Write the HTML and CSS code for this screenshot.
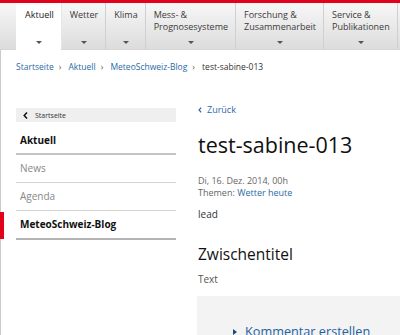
FILE: index.html
```html
<!DOCTYPE html>
<html lang="de">
<head>
    <meta charset="UTF-8">
    <title>test-sabine-013 - MeteoSchweiz</title>
    <link rel="stylesheet" href="styles.css">
</head>
<body>
    <div class="topbar"></div>
    <nav class="mainnav">
        <div class="nav-spacer"></div>
        <a class="tab active" href="#"><span>Aktuell</span><i class="caret"></i></a>
        <a class="tab" href="#"><span>Wetter</span><i class="caret"></i></a>
        <a class="tab" href="#"><span>Klima</span><i class="caret"></i></a>
        <a class="tab" href="#"><span>Mess- &amp;<br>Prognosesysteme</span><i class="caret"></i></a>
        <a class="tab" href="#"><span>Forschung &amp;<br>Zusammenarbeit</span><i class="caret"></i></a>
        <a class="tab" href="#"><span>Service &amp;<br>Publikationen</span><i class="caret"></i></a>
        <div class="nav-rest"></div>
    </nav>

    <div class="page">
        <div class="breadcrumb">
            <a href="#">Startseite</a><span class="sep">&#8250;</span>
            <a href="#">Aktuell</a><span class="sep">&#8250;</span>
            <a href="#">MeteoSchweiz-Blog</a><span class="sep">&#8250;</span>
            <span class="current">test-sabine-013</span>
        </div>

        <div class="columns">
            <aside class="sidenav">
                <a class="back" href="#">
                    <svg width="5" height="7" viewBox="0 0 5 7"><path d="M4 0.5 L1.2 3.5 L4 6.5" fill="none" stroke="#111" stroke-width="1.5"/></svg>
                    Startseite
                </a>
                <a class="side-title" href="#">Aktuell</a>
                <a class="side-item" href="#">News</a>
                <a class="side-item" href="#">Agenda</a>
                <a class="side-item selected" href="#">MeteoSchweiz-Blog</a>
            </aside>

            <main class="content">
                <a class="zurueck" href="#">
                    <svg width="4" height="6" viewBox="0 0 4 6"><path d="M3.2 0.6 L1 3 L3.2 5.4" fill="none" stroke="#2a6aa6" stroke-width="1.2"/></svg>
                    Zurück
                </a>
                <h1>test-sabine-013</h1>
                <p class="meta">Di, 16. Dez. 2014, 00h<br>Themen: <a href="#">Wetter heute</a></p>
                <p class="lead">lead</p>
                <h2>Zwischentitel</h2>
                <p class="text">Text</p>
                <div class="comment-box">
                    <a href="#"><span class="tri"></span>Kommentar erstellen</a>
                </div>
            </main>
        </div>
    </div>
</body>
</html>
```

FILE: styles.css
```css
/* Grundlayout */
body {
    margin: 0;
    font-family: "Open Sans", "Noto Sans", sans-serif;
    color: #222;
    background: #fff;
    overflow: hidden;
}

a {
    text-decoration: none;
    color: #2a6aa6;
}

.topbar {
    height: 3px;
    background: #e2001a;
}

/* Hauptnavigation */
.mainnav {
    display: flex;
    height: 46px;
    background: linear-gradient(#f7f7f7, #dcdcdc);
    border-bottom: 1px solid #d6d6d6;
}

.nav-spacer {
    width: 16px;
    flex: none;
}

.nav-rest {
    flex: 1;
    border-left: 1px solid #d0d0d0;
}

.tab {
    flex: none;
    display: flex;
    flex-direction: column;
    justify-content: space-between;
    align-items: center;
    padding: 6px 7px 5px 8px;
    border-left: 1px solid #d0d0d0;
    font-size: 9px;
    line-height: 12px;
    color: #3a3a3a;
    white-space: nowrap;
}

.tab span {
    align-self: flex-start;
}

.tab.active {
    background: #fff;
    color: #222;
    margin-bottom: -1px;
    padding-bottom: 6px;
    border-left-color: transparent;
}

.tab.active + .tab {
    border-left-color: #e6e6e6;
}

.caret {
    width: 0;
    height: 0;
    border-left: 3px solid transparent;
    border-right: 3px solid transparent;
    border-top: 3px solid #555;
}

/* Seite */
.page {
    border-left: 1px solid #cacaca;
    height: 290px;
    padding-left: 15px;
}

.breadcrumb {
    padding-top: 10px;
    font-size: 8.5px;
    line-height: 14px;
    color: #333;
}

.breadcrumb .sep {
    margin: 0 5px;
    color: #555;
}

.columns {
    display: flex;
    margin-top: 29px;
}

/* Seitennavigation */
.sidenav {
    width: 160px;
    flex: none;
}

.back {
    display: flex;
    align-items: center;
    gap: 7px;
    height: 14px;
    padding-left: 7px;
    margin-top: 5px;
    background: #efefef;
    font-size: 7px;
    color: #333;
}

.side-title {
    display: block;
    padding: 10px 0 5px 4px;
    font-size: 10px;
    line-height: 16px;
    font-weight: bold;
    color: #111;
    border-bottom: 2px solid #c4c4c4;
}

.side-item {
    display: block;
    position: relative;
    padding: 6px 0 7px 4px;
    font-size: 10px;
    line-height: 14px;
    color: #888;
    border-bottom: 1px solid #d4d4d4;
}

.side-item.selected {
    font-weight: bold;
    color: #111;
    border-bottom: 2px solid #b4b4b4;
}

.side-item.selected::before {
    content: "";
    position: absolute;
    left: -16px;
    top: 1px;
    bottom: -1px;
    width: 4px;
    background: #e2001a;
}

/* Inhalt */
.content {
    flex: 1;
    padding-left: 22px;
}

.zurueck {
    display: flex;
    align-items: center;
    gap: 5px;
    font-size: 9px;
    line-height: 13px;
}

h1 {
    margin: 14px 0 0;
    font-size: 21.5px;
    line-height: 30px;
    font-weight: normal;
    color: #111;
}

.meta {
    margin: 15px 0 0;
    font-size: 9px;
    line-height: 12px;
    color: #666;
}

.lead {
    margin: 8px 0 0;
    font-size: 10px;
    line-height: 14px;
    color: #333;
}

h2 {
    margin: 23px 0 0;
    font-size: 15.5px;
    line-height: 20px;
    font-weight: normal;
    color: #111;
}

.text {
    margin: 8px 0 0;
    font-size: 10px;
    line-height: 14px;
    color: #555;
}

.comment-box {
    margin: 10px 0 0 -1px;
    height: 60px;
    padding: 26px 0 0 36px;
    background: #f3f3f3;
    font-size: 12.7px;
    line-height: 18px;
}

.comment-box a {
    color: #1f5f9f;
}

.tri {
    display: inline-block;
    width: 0;
    height: 0;
    border-top: 3px solid transparent;
    border-bottom: 3px solid transparent;
    border-left: 4px solid #1a4a80;
    margin-right: 8px;
    vertical-align: 1px;
}
```
